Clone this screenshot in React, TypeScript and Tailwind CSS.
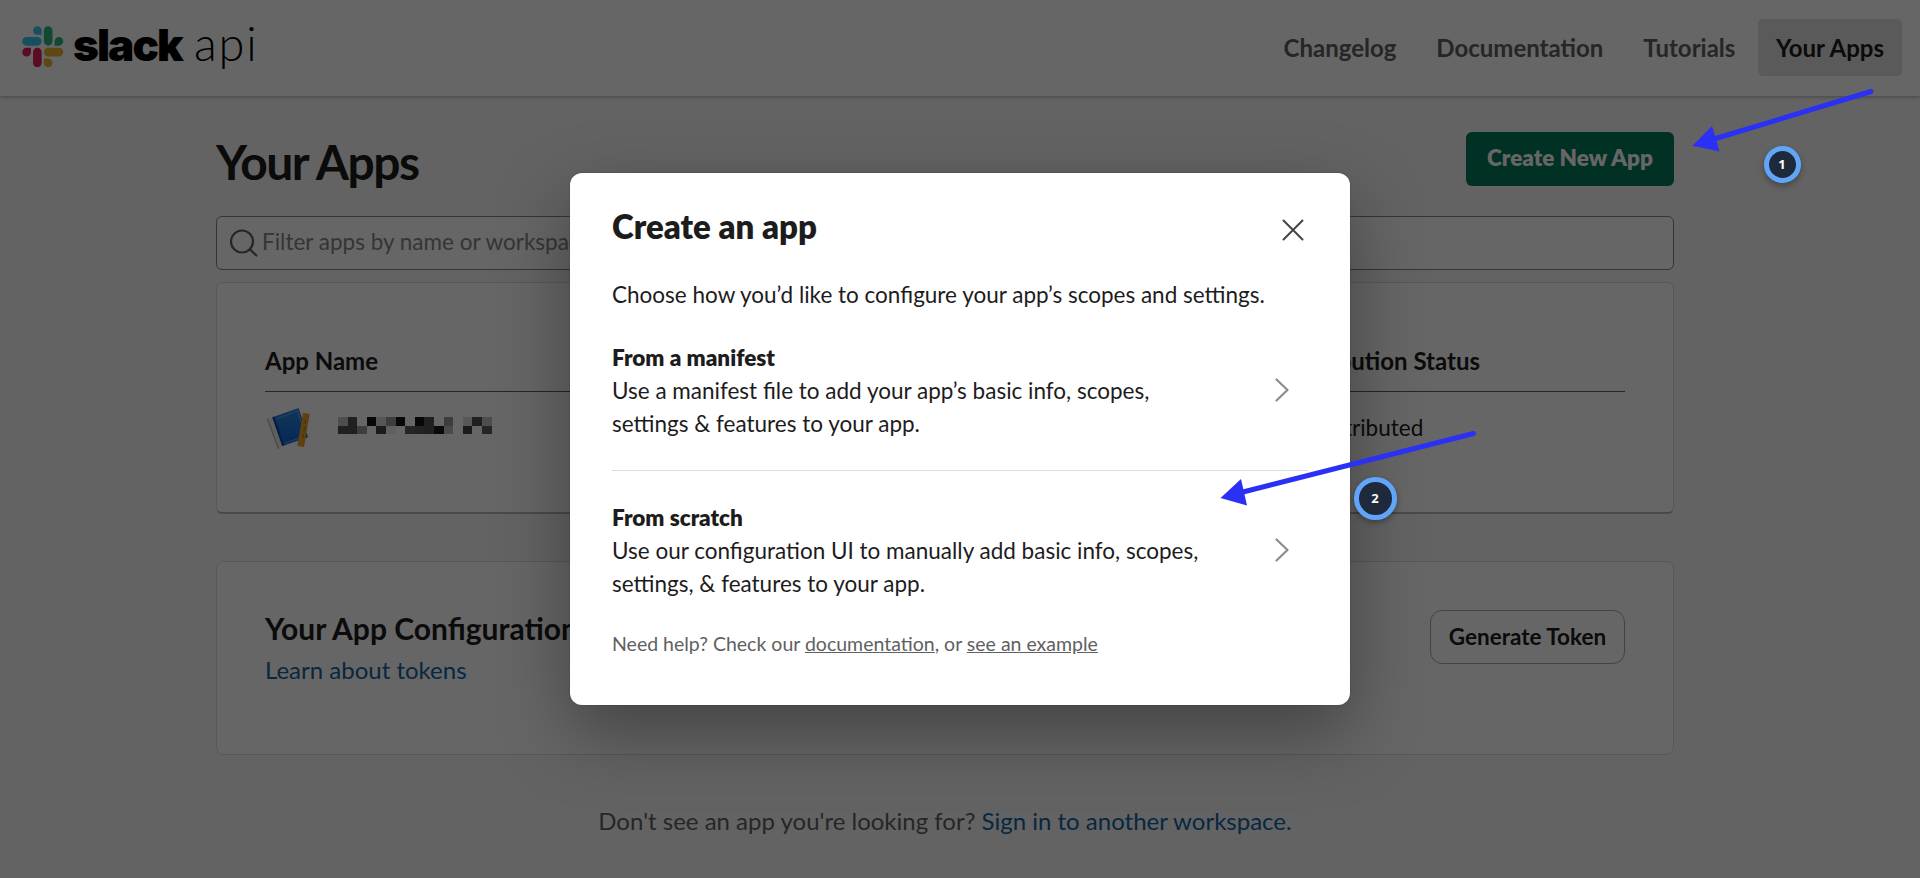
import type { ReactNode } from "react";

const mosaic = [
  ["#c2c2c2", "#525252", "", "#161616", "#d6d6d6", "#989898", "#161616", "", "#161616", "#525252", "", "#9a9a9a", "", "#dcdcdc", "#525252", "#c2c2c2"],
  ["#525252", "#525252", "#9c9c9c", "", "#444444", "#f0f0f0", "", "#5c5c5c", "#565656", "#525252", "#1a1a1a", "#b8b8b8", "", "#444444", "", "#606060"],
];

function SlackMark() {
  return (
    <svg viewBox="0 0 127 127" className="h-[41.500px] w-[41.500px]">
      <path fill="#E01E5A" d="M27.2 80c0 7.3-5.9 13.2-13.2 13.2C6.7 93.2.8 87.3.8 80c0-7.3 5.9-13.2 13.2-13.2h13.2V80zm6.6 0c0-7.3 5.9-13.2 13.2-13.2 7.3 0 13.2 5.9 13.2 13.2v33c0 7.3-5.9 13.2-13.2 13.2-7.3 0-13.2-5.9-13.2-13.2V80z" />
      <path fill="#36C5F0" d="M47 27c-7.3 0-13.2-5.9-13.2-13.2C33.8 6.5 39.7.6 47 .6c7.3 0 13.2 5.9 13.2 13.2V27H47zm0 6.7c7.3 0 13.2 5.9 13.2 13.2 0 7.3-5.9 13.2-13.2 13.2H13.9C6.6 60.1.7 54.2.7 46.9c0-7.3 5.9-13.2 13.2-13.2H47z" />
      <path fill="#2EB67D" d="M99.9 46.9c0-7.3 5.9-13.2 13.2-13.2 7.3 0 13.2 5.9 13.2 13.2 0 7.3-5.9 13.2-13.2 13.2H99.9V46.9zm-6.6 0c0 7.3-5.9 13.2-13.2 13.2-7.3 0-13.2-5.9-13.2-13.2V13.8C66.9 6.5 72.8.6 80.1.6c7.3 0 13.2 5.9 13.2 13.2v33.1z" />
      <path fill="#ECB22E" d="M80.1 99.8c7.3 0 13.2 5.9 13.2 13.2 0 7.3-5.9 13.2-13.2 13.2-7.3 0-13.2-5.9-13.2-13.2V99.8h13.2zm0-6.6c-7.3 0-13.2-5.9-13.2-13.2 0-7.3 5.9-13.2 13.2-13.2h33.1c7.3 0 13.2 5.9 13.2 13.2 0 7.3-5.9 13.2-13.2 13.2H80.1z" />
    </svg>
  );
}

function NavItem({ children, active = false }: { children: ReactNode; active?: boolean }) {
  return (
    <a className={active ? "ml-[0.500px] flex h-[57px] items-center rounded-[5px] bg-[#e0e0e0] px-[18px] text-[#1d1c1d]" : "flex h-[57px] items-center px-[18px] text-[#616061]"}>
      {children}
    </a>
  );
}

function Header() {
  return (
    <header className="flex h-24 items-center justify-between bg-white pr-[18px] pl-[22px] shadow-[0_1px_4px_rgba(0,0,0,0.3)]">
      <div className="flex h-full items-center">
        <div className="-mt-[3px]">
          <SlackMark />
        </div>
        <div className="flex items-baseline pb-2 text-[47px] leading-[57px] text-black">
          <span className="ml-[9.500px] w-[121px] font-['Inter',sans-serif] text-[44px] font-black tracking-[-1.900px]">slack</span>
          <span className="font-light tracking-[1.800px]">api</span>
        </div>
      </div>
      <nav className="flex gap-1 pb-px text-2xl font-bold">
        <NavItem>Changelog</NavItem>
        <NavItem>Documentation</NavItem>
        <NavItem>Tutorials</NavItem>
        <NavItem active>Your Apps</NavItem>
      </nav>
    </header>
  );
}

function AppIcon() {
  return (
    <svg viewBox="0 0 48 48" className="h-12 w-12">
      <defs>
        <linearGradient id="cover" x1="0" y1="0" x2="0" y2="1">
          <stop offset="0" stopColor="#2a86dc" />
          <stop offset="1" stopColor="#1262d6" />
        </linearGradient>
      </defs>
      <path d="M1.300 12.500 12.500 43 16.500 40.500 6 11.500Z" fill="#eeeeee" />
      <path d="M1.300 12.500 12.500 43" stroke="#b5b5b5" strokeWidth="1.200" />
      <path d="M6.300 11.300 32.700 2 42 31.300 16.300 40Z" fill="url(#cover)" />
      <path d="M9.500 13 31.500 5.200 39.500 30 17.500 37.500" fill="none" stroke="#7db8f5" strokeWidth="0.7" />
      <path d="M6.300 11.300 8.300 10.700 18.300 39.300 16.300 40Z" fill="#0d4a9e" />
      <path d="M37 6.700 43.700 8 38 41.300 31.300 39.700Z" fill="#eda32b" />
      <path d="m39.700 14-.8 4m-.2 3-.8 4m-.4 3-.8 4" stroke="#a86a12" strokeWidth="0.9" />
    </svg>
  );
}

function Mosaic() {
  return (
    <div className="flex flex-col">
      {mosaic.map((row, r) => (
        <div key={r} className="flex">
          {row.map((c, i) => (
            <div key={i} className="h-[8.500px] w-[9.600px]" style={{ backgroundColor: c || undefined }} />
          ))}
        </div>
      ))}
    </div>
  );
}

function Page() {
  return (
    <main className="ml-[216px] w-[1458px] pt-9 text-[#1d1c1d]">
      <div className="flex h-[54px] items-center justify-between">
        <h1 className="pt-[5px] text-[48px] leading-[54px] font-bold tracking-[-1.500px]">Your Apps</h1>
        <button className="flex h-[54px] w-[208px] items-center justify-center rounded-[6px] bg-[#007a5a] pb-[2px] text-[22.500px] font-extrabold whitespace-nowrap text-white">
          Create New App
        </button>
      </div>

      <div className="mt-[30px] flex h-[54px] items-center rounded-[6px] border border-[#868686] bg-white pl-[12.500px]">
        <svg viewBox="0 0 28 28" className="h-7 w-7" fill="none" stroke="#616061" strokeWidth="2.200" strokeLinecap="round">
          <circle cx="12" cy="12.500" r="11" />
          <path d="m19.800 20.300 6.500 6.200" />
        </svg>
        <span className="ml-[4.500px] pb-[3px] text-[22.500px] text-[#868686]">Filter apps by name or workspace</span>
      </div>

      <section className="mt-3 h-[232px] rounded-[6px] border border-b-2 border-[#dddddd] border-b-[#b8b8b8] bg-white px-12 pt-[63px]">
        <div className="flex h-[46px] border-b border-[#616061] text-[24px] leading-[29px] font-bold">
          <div className="w-[1014px]">App Name</div>
          <div className="whitespace-nowrap">Distribution Status</div>
        </div>
        <div className="flex h-[72px]">
          <div className="flex w-[1008px]">
            <div className="mt-[14px] ml-[1px]">
              <AppIcon />
            </div>
            <div className="mt-[25px] ml-6">
              <Mosaic />
            </div>
          </div>
          <div className="pt-[19px] text-[22.500px] leading-[33px]">Not distributed</div>
        </div>
      </section>

      <section className="mt-[47px] flex h-[194px] items-start justify-between rounded-lg border border-[#dddddd] bg-white px-12 pt-12">
        <div className="-mt-[2px]">
          <h2 className="text-[30px] leading-[40px] font-bold">Your App Configuration</h2>
          <a className="mt-px block text-[24px] leading-[42px] text-[#1264a3]">Learn about tokens</a>
        </div>
        <button className="flex h-[54px] w-[195px] items-center justify-center rounded-xl border border-[#a8a8a8] text-[22.500px] font-bold whitespace-nowrap">
          Generate Token
        </button>
      </section>

      <p className="mt-12 text-center text-2xl leading-[36px] text-[#616061]">
        Don't see an app you're looking for? <a className="text-[#1264a3]">Sign in to another workspace.</a>
      </p>
    </main>
  );
}

function Chevron() {
  return (
    <svg viewBox="0 0 14 24" className="mr-[19.500px] mb-px h-6 w-[14px]" fill="none" stroke="#8d8c8d" strokeWidth="2.200" strokeLinecap="round" strokeLinejoin="round">
      <path d="m1.500 1.500 11 10.500-11 10.500" />
    </svg>
  );
}

function Option({ title, lines }: { title: string; lines: string[] }) {
  return (
    <div className="flex items-center justify-between leading-[33px]">
      <div>
        <div className="font-extrabold">{title}</div>
        {lines.map((l) => (
          <div key={l}>{l}</div>
        ))}
      </div>
      <Chevron />
    </div>
  );
}

function Modal() {
  return (
    <div className="h-[532px] w-[780px] rounded-xl bg-white px-[42px] text-[22.500px] text-[#1d1c1d] shadow-[0_0_0_1px_rgba(29,28,29,0.13),0_27px_72px_rgba(0,0,0,0.35)]">
      <div className="flex items-center justify-between pt-[25px] pr-1">
        <h2 className="text-[33px] leading-[56px] font-extrabold">Create an app</h2>
        <svg viewBox="0 0 22 22" className="mt-[2px] h-[22px] w-[22px] translate-y-[3px]" fill="none" stroke="#454447" strokeWidth="2" strokeLinecap="round">
          <path d="m1.500 1.500 19 19m0-19-19 19" />
        </svg>
      </div>
      <p className="pt-6 leading-[33px] whitespace-nowrap">Choose how you’d like to configure your app’s scopes and settings.</p>
      <div className="mt-[30px]">
        <Option title="From a manifest" lines={["Use a manifest file to add your app’s basic info, scopes,", "settings & features to your app."]} />
      </div>
      <div className="mt-[30px] border-t border-[#dddddd] pt-[30px]">
        <Option title="From scratch" lines={["Use our configuration UI to manually add basic info, scopes,", "settings, & features to your app."]} />
      </div>
      <p className="mt-[29px] text-[19.500px] leading-[30px] text-[#616061]">
        Need help? Check our <a className="underline">documentation</a>, or <a className="underline">see an example</a>
      </p>
    </div>
  );
}

export default function App() {
  return (
    <div className="relative h-[878px] w-[1920px] overflow-hidden bg-[#f8f8f8] font-['Lato','Liberation_Sans',sans-serif]">
      <Header />
      <Page />
      <div className="absolute inset-0 flex items-start justify-center bg-black/60 pt-[173px]">
        <Modal />
      </div>
      <svg viewBox="0 0 1920 878" className="absolute inset-0 h-full w-full">
        <g stroke="#2b30f5" strokeWidth="5" strokeLinecap="round">
          <path d="M1871 91.500 1714 139" />
          <path d="M1473.500 433.500 1243 492" />
        </g>
        <g fill="#2b30f5">
          <path d="M1692.500 145.800 1712 126 1719.500 151.500Z" />
          <path d="M1220.500 498 1241 479 1247 505.500Z" />
        </g>
      </svg>
      <div className="absolute top-[146px] left-[1763.500px] flex h-[37px] w-[37px] items-center justify-center rounded-full border-[5px] border-[#60a5fa] bg-[#1e293b] font-['Open_Sans',sans-serif] text-[13px] font-bold text-white shadow-[0_3px_6px_rgba(0,0,0,0.3)]">
        1
      </div>
      <div className="absolute top-[477px] left-[1353.500px] flex h-[43px] w-[43px] items-center justify-center rounded-full border-[5px] border-[#60a5fa] bg-[#1e293b] font-['Open_Sans',sans-serif] text-[13px] font-bold text-white shadow-[0_3px_6px_rgba(0,0,0,0.3)]">
        2
      </div>
    </div>
  );
}
